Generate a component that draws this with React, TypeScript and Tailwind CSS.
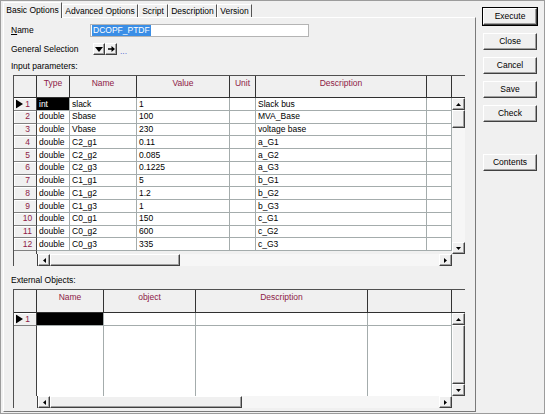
import type { ReactNode } from "react";

const raised =
  "border border-t-white border-l-white border-r-[#404040] border-b-[#404040] shadow-[inset_-1px_-1px_0_#a0a0a0] bg-[#f0f0f0]";
const rowHead =
  "w-[23px] flex-none bg-[#f0f0f0] border-r border-b border-r-[#404040] border-b-[#808080] shadow-[inset_1px_1px_0_#ffffff] text-[#8e1a46] relative flex items-center justify-center pl-[5px]";
const cellBase =
  "flex-none border-r border-b border-[#a4acac] flex items-center pl-[2px] overflow-hidden whitespace-nowrap";
const headCell = "flex-none h-full border-r border-[#333333] text-[#8e1a46] text-center pt-[3px]";

type Dir = "up" | "down" | "left" | "right";

function Tri({ dir }: { dir: Dir }) {
  const vertical = dir === "up" || dir === "down";
  const pts = {
    up: "0,3 2.5,0 5,3",
    down: "0,0 5,0 2.5,3",
    left: "3,0 3,5 0,2.5",
    right: "0,0 0,5 3,2.5",
  }[dir];
  return (
    <svg width={vertical ? 5 : 3} height={vertical ? 3 : 5} viewBox={vertical ? "0 0 5 3" : "0 0 3 5"}>
      <polygon points={pts} fill="#000" />
    </svg>
  );
}

function ArrowBtn({ dir, className }: { dir: Dir; className: string }) {
  return (
    <div className={`${raised} flex flex-none items-center justify-center ${className}`}>
      <Tri dir={dir} />
    </div>
  );
}

function Marker() {
  return (
    <svg className="absolute left-[2px] top-1/2 -translate-y-1/2" width="7" height="9" viewBox="0 0 7 9">
      <polygon points="0,0 7,4.5 0,9" fill="#000" />
    </svg>
  );
}

function HScroll({ thumb }: { thumb: string }) {
  return (
    <div className="flex w-[414px] flex-none bg-[#f6f6f6]">
      <ArrowBtn dir="left" className="w-[12px] h-full" />
      <div className={`${raised} ${thumb} h-full flex-none`} />
      <div className="flex-1" />
      <ArrowBtn dir="right" className="w-[13px] h-full" />
    </div>
  );
}

const params: string[][] = [
  ["int", "slack", "1", "", "Slack bus"],
  ["double", "Sbase", "100", "", "MVA_Base"],
  ["double", "Vbase", "230", "", "voltage base"],
  ["double", "C2_g1", "0.11", "", "a_G1"],
  ["double", "C2_g2", "0.085", "", "a_G2"],
  ["double", "C2_g3", "0.1225", "", "a_G3"],
  ["double", "C1_g1", "5", "", "b_G1"],
  ["double", "C1_g2", "1.2", "", "b_G2"],
  ["double", "C1_g3", "1", "", "b_G3"],
  ["double", "C0_g1", "150", "", "c_G1"],
  ["double", "C0_g2", "600", "", "c_G2"],
  ["double", "C0_g3", "335", "", "c_G3"],
];

const cols1 = ["w-[33px]", "w-[67px]", "w-[93px]", "w-[26px]", "w-[171px]", "w-[25px]"];
const heads1 = ["Type", "Name", "Value", "Unit", "Description", ""];

const cols2 = ["w-[67px]", "w-[92px]", "w-[172px]", "w-[84px]"];
const heads2 = ["Name", "object", "Description", ""];

function InputTable() {
  return (
    <div className="ml-[9px] mt-[4px] flex h-[191px] w-[452px] flex-col border-l border-t border-[#505050]">
      <div className="flex h-[22px] flex-none border-b border-[#303030]">
        <div className={`${headCell} w-[23px]`} />
        {heads1.map((h, i) => (
          <div key={i} className={`${headCell} ${cols1[i]}`}>
            {h}
          </div>
        ))}
      </div>
      <div className="flex h-[156px] flex-none">
        <div className="flex w-[438px] flex-none flex-col">
          {params.map((row, r) => (
            <div key={r} className="flex h-[12.75px] flex-none">
              <div className={rowHead}>
                {r === 0 && <Marker />}
                {r + 1}
              </div>
              {[...row, ""].map((c, i) => (
                <div
                  key={i}
                  className={`${cellBase} ${cols1[i]} ${r === 0 && i === 0 ? "bg-black text-white" : "bg-white"}`}
                >
                  {c}
                </div>
              ))}
            </div>
          ))}
          <div className="flex flex-1">
            <div className="w-[23px] border-r border-[#404040]" />
          </div>
        </div>
        <div className="flex w-[13px] flex-none flex-col bg-[#f6f6f6]">
          <ArrowBtn dir="up" className="h-[12px] w-full" />
          <div className={`${raised} h-[18px] w-full flex-none`} />
          <div className="flex-1" />
          <ArrowBtn dir="down" className="h-[12px] w-full" />
        </div>
      </div>
      <div className="flex h-[12px] flex-none">
        <div className="w-[24px] flex-none border-r border-[#404040]" />
        <HScroll thumb="w-[130px]" />
      </div>
    </div>
  );
}

function ExternalTable() {
  return (
    <div className="ml-[9px] mt-[4px] flex h-[119px] w-[452px] flex-col border-l border-t border-[#505050]">
      <div className="flex h-[23px] flex-none border-b border-[#303030]">
        <div className={`${headCell} w-[23px]`} />
        {heads2.map((h, i) => (
          <div key={i} className={`${headCell} ${cols2[i]}`}>
            {h}
          </div>
        ))}
      </div>
      <div className="flex h-[83px] flex-none">
        <div className="flex w-[438px] flex-none flex-col">
          <div className="flex h-[13px] flex-none">
            <div className={rowHead}>
              <Marker />1
            </div>
            {cols2.map((w, i) => (
              <div key={i} className={`${cellBase} ${w} ${i === 0 ? "bg-black" : "bg-white"}`} />
            ))}
          </div>
          <div className="flex flex-1">
            <div className="w-[23px] flex-none border-r border-[#404040] bg-[#f0f0f0]" />
            {cols2.map((w, i) => (
              <div key={i} className={`${w} flex-none border-r border-[#a4acac] bg-white`} />
            ))}
          </div>
        </div>
        <div className="flex w-[13px] flex-none flex-col bg-[#f6f6f6]">
          <ArrowBtn dir="up" className="h-[12px] w-full" />
          <div className={`${raised} w-full flex-1`} />
          <ArrowBtn dir="down" className="h-[12px] w-full" />
        </div>
      </div>
      <div className="flex h-[12px] flex-none">
        <div className="w-[24px] flex-none border-r border-[#404040]" />
        <HScroll thumb="w-[192px]" />
      </div>
    </div>
  );
}

function Tab({ children, active, w }: { children: ReactNode; active?: boolean; w: string }) {
  return (
    <div
      className={`${w} flex flex-none items-center justify-center border-l border-t border-r border-l-white border-t-white border-r-[#555555] ${
        active ? "relative z-10 h-[16px] bg-[#f0f0f0]" : "mt-[2px] h-[13px]"
      }`}
    >
      {children}
    </div>
  );
}

function SideButton({ children, main, className }: { children: ReactNode; main?: boolean; className: string }) {
  return (
    <div
      className={`${raised} ${className} flex h-[17px] w-[54px] items-center justify-center ${
        main ? "outline outline-1 outline-black" : ""
      }`}
    >
      {children}
    </div>
  );
}

export default function App() {
  return (
    <div className="flex h-[414px] w-[545px] border border-[#9c9c9c] bg-[#f0f0f0] font-['Liberation_Sans',Arial,sans-serif] text-[8.5px] leading-none text-black">
      <div className="ml-[2px] mt-[1px] flex w-[473px] flex-none flex-col">
        <div className="flex h-[15px] flex-none items-start">
          <Tab w="w-[59px]" active>
            Basic Options
          </Tab>
          <Tab w="w-[76px]">Advanced Options</Tab>
          <Tab w="w-[30px]">Script</Tab>
          <Tab w="w-[49px]">Description</Tab>
          <Tab w="w-[35px]">Version</Tab>
        </div>
        <div className="flex h-[395px] w-[473px] flex-none flex-col border border-l-white border-t-white border-r-[#7a7a7a] border-b-[#7a7a7a]">
          <div className="mt-[6px] flex h-[13px] flex-none items-center">
            <span className="ml-[7px] w-[79px]">
              <span className="underline">N</span>ame
            </span>
            <div className="flex h-full w-[219px] items-center border border-[#b4b4b4] bg-white pl-[1px]">
              <span className="bg-[#3a8ee6] px-[1px] py-[1px] text-white">DCOPF_PTDF</span>
            </div>
          </div>
          <div className="mt-[6px] flex h-[12px] flex-none items-center">
            <span className="ml-[7px] w-[82px]">General Selection</span>
            <div className={`${raised} flex h-[12px] w-[12px] items-center justify-center`}>
              <svg width="8" height="5" viewBox="0 0 8 5">
                <polygon points="0,0 8,0 4,5" fill="#000" />
              </svg>
            </div>
            <div className={`${raised} flex h-[12px] w-[12px] items-center justify-center`}>
              <svg width="7" height="6" viewBox="0 0 7 6">
                <path d="M0 2.2 H3.5 V0 L7 3 L3.5 6 V3.8 H0 Z" fill="#000" />
              </svg>
            </div>
            <span className="ml-[3px] mt-[5px] text-[#5a6fd0]">...</span>
          </div>
          <div className="ml-[7px] mt-[6px] flex h-[10px] flex-none items-center">Input parameters:</div>
          <InputTable />
          <div className="ml-[7px] mt-[9px] flex h-[10px] flex-none items-center">External Objects:</div>
          <ExternalTable />
        </div>
      </div>
      <div className="ml-[7px] flex flex-col">
        <SideButton main className="mt-[7px]">
          Execute
        </SideButton>
        <SideButton className="mt-[8px]">Close</SideButton>
        <SideButton className="mt-[7px]">Cancel</SideButton>
        <SideButton className="mt-[7px]">Save</SideButton>
        <SideButton className="mt-[7px]">Check</SideButton>
        <SideButton className="mt-[32px]">Contents</SideButton>
      </div>
    </div>
  );
}
